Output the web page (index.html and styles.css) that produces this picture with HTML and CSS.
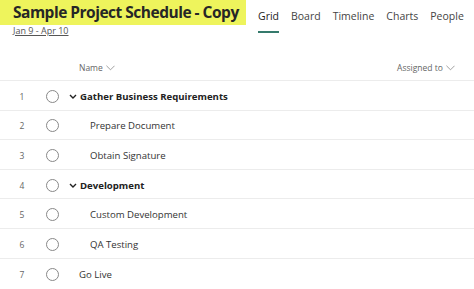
FILE: index.html
```html
<!DOCTYPE html>
<html lang="en">
<head>
    <meta charset="UTF-8">
    <title>Sample Project Schedule - Copy</title>
    <link rel="stylesheet" href="styles.css">
</head>
<body>
    <div class="top">
        <div class="plan-title">
            <h1>Sample Project Schedule - Copy</h1>
            <a class="dates" href="#">Jan 9 - Apr 10</a>
        </div>
        <nav class="tabs">
            <a class="tab active" href="#">Grid</a>
            <a class="tab" href="#">Board</a>
            <a class="tab" href="#">Timeline</a>
            <a class="tab" href="#">Charts</a>
            <a class="tab" href="#">People</a>
        </nav>
    </div>

    <div class="grid">
        <div class="grid-head">
            <span class="col-name">Name <svg class="caret" viewBox="0 0 10 6"><path d="M0.5 0.5 L5 5 L9.5 0.5"/></svg></span>
            <span class="col-assigned">Assigned to <svg class="caret" viewBox="0 0 10 6"><path d="M0.5 0.5 L5 5 L9.5 0.5"/></svg></span>
        </div>

        <div class="row">
            <span class="num">1</span><span class="check"></span>
            <span class="task group"><svg class="chev" viewBox="0 0 8 5"><path d="M1 1 L4 4 L7 1"/></svg>Gather Business Requirements</span>
        </div>
        <div class="row">
            <span class="num">2</span><span class="check"></span>
            <span class="task sub">Prepare Document</span>
        </div>
        <div class="row">
            <span class="num">3</span><span class="check"></span>
            <span class="task sub">Obtain Signature</span>
        </div>
        <div class="row">
            <span class="num">4</span><span class="check"></span>
            <span class="task group"><svg class="chev" viewBox="0 0 8 5"><path d="M1 1 L4 4 L7 1"/></svg>Development</span>
        </div>
        <div class="row">
            <span class="num">5</span><span class="check"></span>
            <span class="task sub">Custom Development</span>
        </div>
        <div class="row">
            <span class="num">6</span><span class="check"></span>
            <span class="task sub">QA Testing</span>
        </div>
        <div class="row last">
            <span class="num">7</span><span class="check"></span>
            <span class="task">Go Live</span>
        </div>
    </div>
</body>
</html>
```

FILE: styles.css
```css
* {
    box-sizing: border-box;
}

body {
    margin: 0;
    font-family: "Open Sans", "Noto Sans", sans-serif;
    color: #333;
    background: #fff;
}

.top {
    display: flex;
    align-items: flex-start;
    height: 55px;
}

.plan-title {
    width: 246px;
    flex-shrink: 0;
}

.plan-title h1 {
    margin: 0;
    height: 25px;
    padding: 0 0 0 13px;
    background: #eef45c;
    font-size: 15.5px;
    font-weight: 700;
    line-height: 25px;
    color: #262626;
    letter-spacing: -0.5px;
    white-space: nowrap;
}

.dates {
    display: block;
    margin: 0 0 0 13px;
    font-size: 9px;
    line-height: 12px;
    color: #555;
}

.tabs {
    display: flex;
    gap: 12px;
    padding: 9px 0 0 12px;
}

.tab {
    font-size: 10.5px;
    color: #444;
    text-decoration: none;
    padding-bottom: 8px;
    border-bottom: 2px solid transparent;
}

.tab.active {
    color: #222;
    border-bottom-color: #357a6c;
}

.grid-head {
    display: flex;
    justify-content: space-between;
    align-items: center;
    height: 26px;
    padding: 0 19px 0 79px;
    border-bottom: 1px solid #ececec;
    font-size: 8.5px;
    color: #666;
}

.caret {
    width: 9px;
    height: 6px;
    margin-left: 1px;
    fill: none;
    stroke: #888;
    stroke-width: 0.9;
}

.row {
    display: flex;
    align-items: center;
    height: 29.6px;
    border-bottom: 1px solid #ececec;
    font-size: 9.6px;
    padding-top: 2px;
}

.row.last {
    border-bottom: none;
}

.num {
    width: 44px;
    text-align: center;
    color: #666;
    font-size: 8.5px;
}

.check {
    width: 13px;
    height: 13px;
    border: 1px solid #888;
    border-radius: 50%;
    margin-left: 2px;
}

.task {
    margin-left: 20px;
    color: #333;
}

.task.sub {
    margin-left: 31px;
}

.task.group {
    margin-left: 10px;
    font-weight: 700;
    color: #222;
    display: flex;
    align-items: center;
}

.chev {
    width: 8px;
    height: 5px;
    margin-right: 3px;
    fill: none;
    stroke: #222;
    stroke-width: 1.4;
}
```
